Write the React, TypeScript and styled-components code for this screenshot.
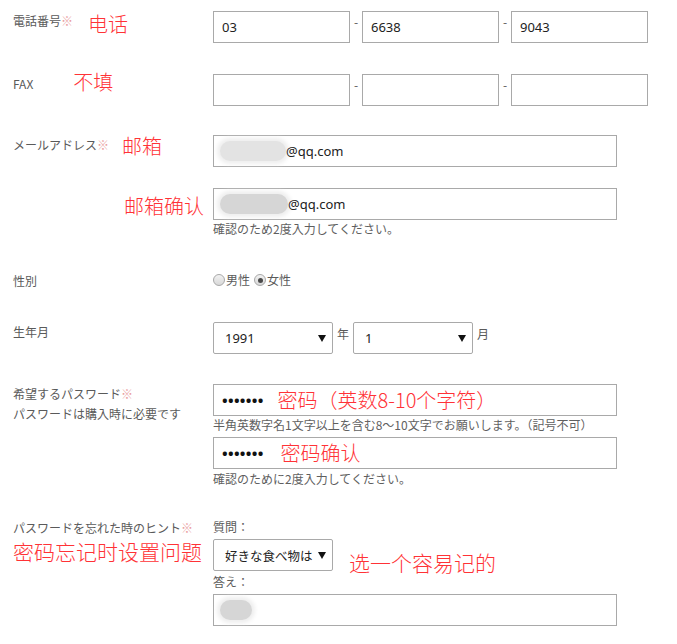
import styled, { createGlobalStyle } from 'styled-components'

const GlobalStyle = createGlobalStyle`
  body {
    margin: 0;
    background: #fff;
    font-family: "Noto Sans CJK JP", "Noto Sans", sans-serif;
    font-size: 12px;
    color: #5a5a5a;
  }
`

const Page = styled.form`
  padding: 11px 0 20px 13px;
  width: 664px;
`

const Row = styled.div<{ $gap?: number }>`
  display: grid;
  grid-template-columns: 200px 1fr;
  align-items: start;
  margin-bottom: ${props => props.$gap ?? 30}px;
`

const LabelCell = styled.div`
  display: flex;
  flex-wrap: wrap;
  align-items: flex-start;
  line-height: 20px;
`

const LabelText = styled.span`
  line-height: 20px;
`

const Required = styled.span`
  color: #eaa0a0;
`

const Memo = styled.span<{ $x?: number; $y?: number; $size?: number }>`
  margin-left: ${props => props.$x ?? 0}px;
  margin-top: ${props => props.$y ?? 0}px;
  font-family: "Noto Sans CJK SC", sans-serif;
  font-size: ${props => props.$size ?? 20}px;
  font-weight: 300;
  line-height: 22px;
  color: #ff3236;
  white-space: nowrap;
`

const FieldCell = styled.div`
  display: flex;
  flex-direction: column;
  align-items: flex-start;
`

const Inline = styled.div`
  display: flex;
  align-items: flex-start;
`

const InputBox = styled.div<{ $w?: number; $top?: number }>`
  box-sizing: border-box;
  width: ${props => props.$w ?? 404}px;
  height: 32px;
  margin-top: ${props => props.$top ?? 0}px;
  border: 1px solid #a9a9a9;
  padding: 0 8px;
  display: flex;
  align-items: center;
  font-family: "Noto Sans", sans-serif;
  font-size: 13px;
  color: #222;
  background: #fff;
`

const Dash = styled.span`
  width: 12px;
  text-align: center;
  line-height: 18px;
  margin-top: 2px;
`

const Unit = styled.span`
  margin: 2px 4px 0;
  line-height: 20px;
`

const Hidden = styled.span<{ $w: number; $dark?: boolean }>`
  display: inline-block;
  width: ${props => props.$w}px;
  height: 20px;
  border-radius: 10px;
  background: ${props => (props.$dark ? '#d6d6d6' : '#e3e3e3')};
  box-shadow: 0 0 4px 3px #eeeeee;
  margin-left: -2px;
`

const Dots = styled.span`
  font-family: "Noto Sans", sans-serif;
  font-size: 15px;
  font-weight: bold;
  letter-spacing: 0.3px;
  color: #111;
  line-height: 1;
`

const SelectBox = styled.div`
  box-sizing: border-box;
  width: 120px;
  height: 32px;
  border: 1px solid #a9a9a9;
  border-radius: 2px;
  padding: 0 6px 0 11px;
  display: flex;
  align-items: center;
  justify-content: space-between;
  font-family: "Noto Sans", "Noto Sans CJK JP", sans-serif;
  font-size: 13px;
  color: #222;
  background: #fff;
  white-space: nowrap;
  overflow: hidden;
`

const OptionText = styled.span`
  font-size: 12.5px;
`

const Note = styled.div<{ $top?: number }>`
  margin-top: ${props => props.$top ?? 0}px;
  line-height: 18px;
  color: #5f5f5f;
`

const Small = styled.div<{ $bottom?: number }>`
  line-height: 18px;
  margin-bottom: ${props => props.$bottom ?? 0}px;
`

const RadioGroup = styled.div`
  display: flex;
  align-items: center;
  gap: 4px;
  line-height: 18px;
`

const RadioLabel = styled.label`
  display: flex;
  align-items: center;
`

const RadioDot = styled.span<{ $checked?: boolean }>`
  box-sizing: border-box;
  width: 12px;
  height: 12px;
  border-radius: 50%;
  border: 1px solid #a8a8a8;
  background: linear-gradient(#f2f2f2, #d8d8d8);
  display: flex;
  align-items: center;
  justify-content: center;
  margin-right: 1px;

  &::after {
    content: '';
    display: ${props => (props.$checked ? 'block' : 'none')};
    width: 5px;
    height: 5px;
    border-radius: 50%;
    background: #4a4a4a;
  }
`

function Arrow() {
  return (
    <svg width="8" height="7" viewBox="0 0 8 7">
      <path d="M0 0 H8 L4 7 Z" fill="#111" />
    </svg>
  )
}

function Label({ text, required }: { text: string; required?: boolean }) {
  return (
    <LabelText>
      {text}
      {required && <Required>※</Required>}
    </LabelText>
  )
}

export default function App() {
  return (
    <>
      <GlobalStyle />
      <Page>
        <Row $gap={31}>
          <LabelCell>
            <Label text="電話番号" required />
            <Memo $x={15} $y={2}>电话</Memo>
          </LabelCell>
          <Inline>
            <InputBox $w={137}>03</InputBox>
            <Dash>-</Dash>
            <InputBox $w={137}>6638</InputBox>
            <Dash>-</Dash>
            <InputBox $w={137}>9043</InputBox>
          </Inline>
        </Row>

        <Row $gap={29}>
          <LabelCell>
            <Label text="FAX" />
            <Memo $x={40} $y={-3}>不填</Memo>
          </LabelCell>
          <Inline>
            <InputBox $w={137} />
            <Dash>-</Dash>
            <InputBox $w={137} />
            <Dash>-</Dash>
            <InputBox $w={137} />
          </Inline>
        </Row>

        <Row $gap={21}>
          <LabelCell>
            <Label text="メールアドレス" required />
            <Memo $x={13}>邮箱</Memo>
          </LabelCell>
          <FieldCell>
            <InputBox>
              <Hidden $w={66} />
              @qq.com
            </InputBox>
          </FieldCell>
        </Row>

        <Row $gap={33}>
          <LabelCell>
            <Memo $x={111} $y={7}>邮箱确认</Memo>
          </LabelCell>
          <FieldCell>
            <InputBox>
              <Hidden $w={68} $dark />
              @qq.com
            </InputBox>
            <Note>確認のため2度入力してください。</Note>
          </FieldCell>
        </Row>

        <Row $gap={31}>
          <LabelCell>
            <Label text="性別" />
          </LabelCell>
          <RadioGroup>
            <RadioLabel>
              <RadioDot />
              男性
            </RadioLabel>
            <RadioLabel>
              <RadioDot $checked />
              女性
            </RadioLabel>
          </RadioGroup>
        </Row>

        <Row $gap={30}>
          <LabelCell>
            <Label text="生年月" />
          </LabelCell>
          <Inline>
            <SelectBox>
              1991
              <Arrow />
            </SelectBox>
            <Unit>年</Unit>
            <SelectBox>
              1
              <Arrow />
            </SelectBox>
            <Unit>月</Unit>
          </Inline>
        </Row>

        <Row $gap={30}>
          <LabelCell>
            <Label text="希望するパスワード" required />
            <LabelText>パスワードは購入時に必要です</LabelText>
          </LabelCell>
          <FieldCell>
            <InputBox>
              <Dots>•••••••</Dots>
              <Memo $x={14}>密码（英数8-10个字符）</Memo>
            </InputBox>
            <Note>半角英数字名1文字以上を含む8～10文字でお願いします。（記号不可）</Note>
            <InputBox $top={3}>
              <Dots>•••••••</Dots>
              <Memo $x={17}>密码确认</Memo>
            </InputBox>
            <Note $top={1}>確認のために2度入力してください。</Note>
          </FieldCell>
        </Row>

        <Row $gap={0}>
          <LabelCell>
            <Label text="パスワードを忘れた時のヒント" required />
            <Memo $size={21} $y={2}>密码忘记时设置问题</Memo>
          </LabelCell>
          <FieldCell>
            <Small $bottom={3}>質問：</Small>
            <Inline>
              <SelectBox>
                <OptionText>好きな食べ物は</OptionText>
                <Arrow />
              </SelectBox>
              <Memo $x={16} $y={12} $size={21}>选一个容易记的</Memo>
            </Inline>
            <Small $bottom={3}>答え：</Small>
            <InputBox>
              <Hidden $w={32} $dark />
            </InputBox>
          </FieldCell>
        </Row>
      </Page>
    </>
  )
}
